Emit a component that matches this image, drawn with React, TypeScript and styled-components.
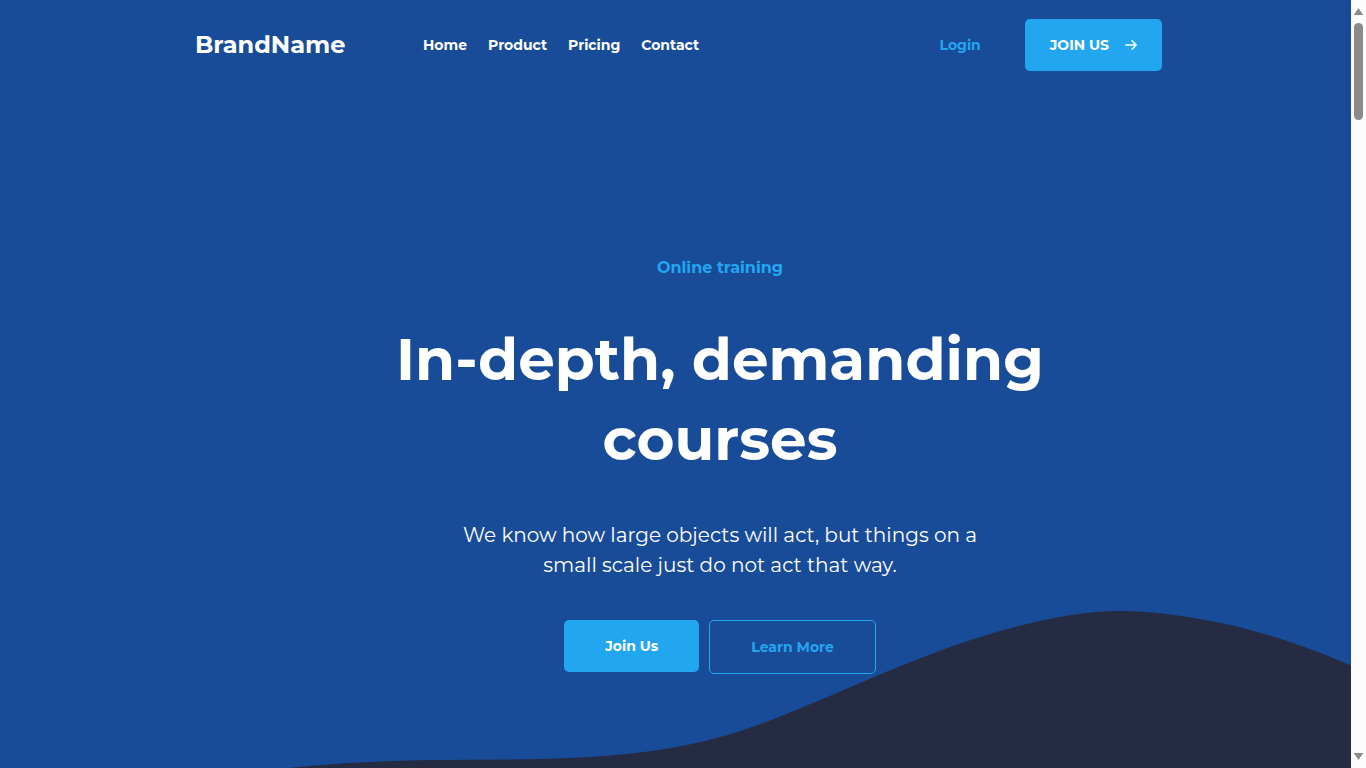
import React from "react";
import styled, { createGlobalStyle } from "styled-components";

const color = {
  base: "#194c98",
  dark: "#252b42",
  accent: "#23a6f0",
  track: "#fcfcfc",
  thumb: "#8b8b8b",
};

const GlobalStyle = createGlobalStyle`
  *, *::before, *::after { box-sizing: border-box; }
  html, body, #root { height: 100%; }
  body {
    margin: 0;
    overflow: hidden;
    font-family: Montserrat, Inter, "Liberation Sans", sans-serif;
    color: #fff;
    background: ${color.base};
  }
`;

const Shell = styled.div`
  display: flex;
  height: 100vh;
`;

const Page = styled.div`
  position: relative;
  flex: 1;
  min-width: 0;
  overflow: hidden;
  background: ${color.base};
`;

const Wave = styled.svg`
  position: absolute;
  left: 0;
  bottom: 0;
  width: 100%;
  height: 160px;
  fill: ${color.dark};
`;

const Header = styled.header`
  position: relative;
  display: flex;
  align-items: center;
  max-width: 1051px;
  height: 90px;
  margin: 0 auto;
  padding: 0 39px 0 45px;
`;

const Brand = styled.a`
  width: 228px;
  font-size: 24px;
  font-weight: 700;
  line-height: 32px;
  color: #fff;
  text-decoration: none;
`;

const Nav = styled.nav`
  display: flex;
  gap: 21px;
`;

const NavLink = styled.a`
  font-size: 14px;
  font-weight: 700;
  line-height: 24px;
  color: #fff;
  text-decoration: none;
`;

const Actions = styled.div`
  display: flex;
  align-items: center;
  gap: 44px;
  margin-left: auto;
`;

const LoginLink = styled(NavLink)`
  color: ${color.accent};
`;

const Button = styled.button<{ $outline?: boolean }>`
  display: flex;
  align-items: center;
  justify-content: center;
  gap: 16px;
  padding: 15px 41px;
  border: ${(p) => (p.$outline ? `1px solid ${color.accent}` : "0")};
  border-radius: 5px;
  background: ${(p) => (p.$outline ? "transparent" : color.accent)};
  color: ${(p) => (p.$outline ? color.accent : "#fff")};
  font-family: inherit;
  font-size: 14px;
  font-weight: 700;
  line-height: 22px;
  white-space: nowrap;
  cursor: pointer;
`;

const HeaderButton = styled(Button)`
  padding: 15px 25px;
`;

const Hero = styled.main`
  position: relative;
  display: flex;
  flex-direction: column;
  align-items: center;
  gap: 40px;
  max-width: 1051px;
  margin: 0 auto;
  padding: 166px 1px 0 90px;
  text-align: center;
`;

const Eyebrow = styled.p`
  margin: 0;
  font-size: 16px;
  font-weight: 700;
  line-height: 24px;
  color: ${color.accent};
`;

const Title = styled.h1`
  max-width: 720px;
  margin: 0;
  font-size: 58px;
  font-weight: 700;
  line-height: 80px;
`;

const Lead = styled.p`
  max-width: 536px;
  margin: 0;
  font-size: 20px;
  line-height: 30px;
`;

const ButtonRow = styled.div`
  display: flex;
  align-items: flex-start;
  gap: 10px;
`;

const Scrollbar = styled.div`
  display: flex;
  flex-direction: column;
  align-items: center;
  width: 15px;
  padding: 8px 0;
  background: ${color.track};
`;

const Thumb = styled.div`
  width: 9px;
  height: 97px;
  margin: 8px 0 auto;
  border-radius: 5px;
  background: ${color.thumb};
`;

const links = ["Home", "Product", "Pricing", "Contact"];

export default function App() {
  return (
    <Shell>
      <GlobalStyle />
      <Page>
        <Wave viewBox="0 608 1351 160" preserveAspectRatio="none" aria-hidden="true">
          <path d="M289 768C338 763 386 760.500 435 760C487 759.500 538 760 590 757C635 754 679 749 724 736C774 721.500 824 698 874 677C924 656 973 637 1023 625C1055 617 1088 611 1120 611C1154 611 1187 616 1221 623C1264 632 1308 647 1351 665.500V768Z" />
        </Wave>
        <Header>
          <Brand href="#">BrandName</Brand>
          <Nav>
            {links.map((label) => (
              <NavLink key={label} href="#">
                {label}
              </NavLink>
            ))}
          </Nav>
          <Actions>
            <LoginLink href="#">Login</LoginLink>
            <HeaderButton type="button">
              JOIN US
              <svg width="12" height="10" viewBox="0 0 12 10" fill="none" stroke="currentColor" strokeWidth="1.5" strokeLinecap="round" strokeLinejoin="round" aria-hidden="true">
                <path d="M0.800 5H11.200M7 0.800L11.200 5L7 9.200" />
              </svg>
            </HeaderButton>
          </Actions>
        </Header>
        <Hero>
          <Eyebrow>Online training</Eyebrow>
          <Title>In-depth, demanding courses</Title>
          <Lead>We know how large objects will act, but things on a small scale just do not act that way.</Lead>
          <ButtonRow>
            <Button type="button">Join Us</Button>
            <Button type="button" $outline>
              Learn More
            </Button>
          </ButtonRow>
        </Hero>
      </Page>
      <Scrollbar aria-hidden="true">
        <svg width="9" height="7" viewBox="0 0 9 7" fill={color.thumb}>
          <path d="M4.500 0L9 6.500V7H0V6.500Z" />
        </svg>
        <Thumb />
        <svg width="9" height="7" viewBox="0 0 9 7" fill={color.thumb}>
          <path d="M4.500 7L9 0.500V0H0V0.500Z" />
        </svg>
      </Scrollbar>
    </Shell>
  );
}
